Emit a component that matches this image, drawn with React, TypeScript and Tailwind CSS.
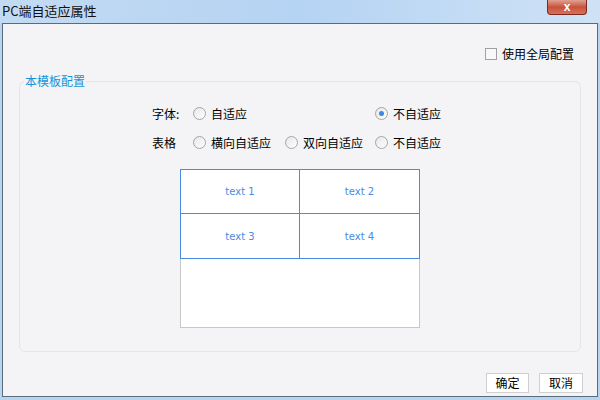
import React from 'react'

const font = { fontFamily: '"Noto Sans CJK SC", "Liberation Sans", sans-serif' }

function Radio({ checked }: { checked?: boolean }) {
  return (
    <span className="w-[13px] h-[13px] rounded-full border border-[#a5a5a5] bg-gradient-to-br from-[#e6e6e6] to-white flex items-center justify-center shrink-0">
      {checked && <span className="w-[5px] h-[5px] rounded-full bg-[#3d86e8]" />}
    </span>
  )
}

function Option({ label, checked, className = '' }: { label: string; checked?: boolean; className?: string }) {
  return (
    <div className={`flex items-center gap-[5px] ${className}`}>
      <Radio checked={checked} />
      <span>{label}</span>
    </div>
  )
}

export default function App() {
  return (
    <div className="w-[600px] h-[400px] bg-[#b9d4ef] flex flex-col text-[12px] text-black" style={font}>
      {/* Title bar */}
      <div className="h-[23px] flex items-start justify-between bg-gradient-to-r from-[#c3daf2] via-[#b5d3f3] to-[#cfe2f5]">
        <span className="pl-[2px] pt-[2px] text-[13px] leading-[18px] text-[#111]">PC端自适应属性</span>
        <div className="mr-[13px] w-[40px] h-[15px] rounded-b-[4px] border border-t-0 border-[#7a2a20] bg-gradient-to-b from-[#e0a090] via-[#c8523c] to-[#d8705a] flex items-center justify-center">
          <span className="text-white font-bold text-[12px] leading-none" style={{ fontFamily: '"Liberation Sans", sans-serif' }}>x</span>
        </div>
      </div>

      {/* Body */}
      <div className="mx-[2px] mb-[3px] flex-1 border border-[#5b6b7c] bg-[#f4f4f6] flex flex-col">
        <div className="flex justify-end pr-[23px] pt-[21px]">
          <label className="flex items-center gap-[5px]">
            <span className="w-[12px] h-[12px] border border-[#a0a0a0] bg-[#f8f8f8]" />
            <span>使用全局配置</span>
          </label>
        </div>

        {/* Group */}
        <div className="relative mx-[16px] mt-[18px] h-[271px] border border-[#e5e5e8] rounded-[6px]">
          <span className="absolute left-[4px] top-[-9px] px-[1px] bg-[#f4f4f6] text-[#1693d8] leading-[16px]">本模板配置</span>

          <div className="pl-[132px] pt-[23px] flex flex-col gap-[12px]">
            <div className="flex items-center h-[17px]">
              <span className="w-[41px]">字体:</span>
              <Option label="自适应" className="w-[182px]" />
              <Option label="不自适应" checked />
            </div>
            <div className="flex items-center h-[17px]">
              <span className="w-[41px]">表格</span>
              <Option label="横向自适应" className="w-[92px]" />
              <Option label="双向自适应" className="w-[90px]" />
              <Option label="不自适应" />
            </div>
          </div>

          <div className="ml-[160px] mt-[18px] w-[240px] h-[159px] bg-white border border-[#c8c8c8] flex flex-col">
            <div className="grid grid-cols-2 border border-[#4a8ae0] -m-px text-[#4a8ae0] text-[10px]" style={{ fontFamily: '"DejaVu Sans", sans-serif' }}>
              <div className="h-[44px] flex items-center justify-center border-r border-b border-[#4a8ae0]">text 1</div>
              <div className="h-[44px] flex items-center justify-center border-b border-[#4a8ae0]">text 2</div>
              <div className="h-[44px] flex items-center justify-center border-r border-[#4a8ae0]">text 3</div>
              <div className="h-[44px] flex items-center justify-center">text 4</div>
            </div>
          </div>
        </div>

        <div className="flex justify-end gap-[10px] pr-[14px] mt-[21px]">
          <button className="w-[43px] h-[20px] bg-white border border-[#d0d0d0] leading-none">确定</button>
          <button className="w-[44px] h-[20px] bg-white border border-[#d0d0d0] leading-none">取消</button>
        </div>
      </div>
    </div>
  )
}
